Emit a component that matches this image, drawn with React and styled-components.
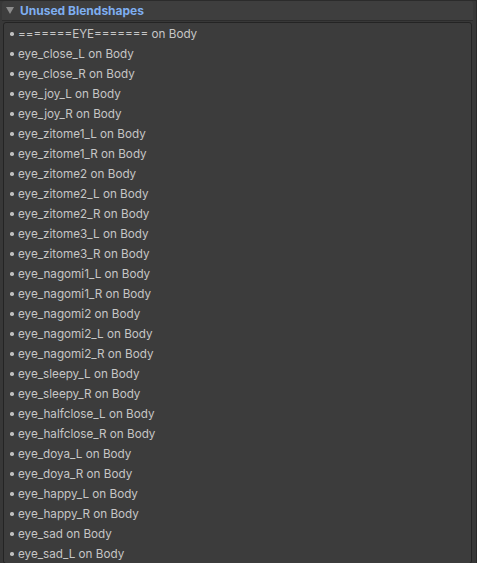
import React from 'react'
import styled, { createGlobalStyle } from 'styled-components'

const Global = createGlobalStyle`
  html, body {
    margin: 0;
    padding: 0;
    background: #383838;
    overflow: hidden;
  }
`

const Panel = styled.div`
  width: 477px;
  height: 563px;
  box-sizing: border-box;
  border-top: 1px solid #2b2b2b;
  padding-right: 3px;
  border-right: 1px solid #2a2a2a;
  font-family: Inter, "Noto Sans", sans-serif;
  overflow: hidden;
`

const Header = styled.div`
  display: flex;
  align-items: center;
  gap: 6px;
  height: 19px;
  margin-left: 2px;
  padding-left: 4px;
  background: #3e3e3e;
  border-radius: 3px 3px 0 0;
  border-bottom: 1px solid #2c2c2c;
`

const Arrow = styled.span`
  width: 0;
  height: 0;
  border-left: 4px solid transparent;
  border-right: 4px solid transparent;
  border-top: 7px solid #8c8c8c;
`

const Title = styled.span`
  color: #7eaef0;
  font-size: 12px;
  font-weight: 700;
`

const List = styled.ul`
  list-style: none;
  margin: 1px 1px 0 3px;
  padding: 0;
  background: #3c3c3c;
  border: 1px solid #242424;
  border-radius: 3px;
`

const Row = styled.li`
  display: flex;
  align-items: center;
  box-sizing: border-box;
  height: 20px;
  padding: 2px 0 0 6px;
  color: #c6c6c6;
  font-size: 11.7px;
  white-space: nowrap;

  &::before {
    content: '';
    width: 3.5px;
    height: 3.5px;
    border-radius: 50%;
    background: #c0c0c0;
    margin-right: 4.5px;
  }
`

const names = [
  '=======EYE=======',
  'eye_close_L',
  'eye_close_R',
  'eye_joy_L',
  'eye_joy_R',
  'eye_zitome1_L',
  'eye_zitome1_R',
  'eye_zitome2',
  'eye_zitome2_L',
  'eye_zitome2_R',
  'eye_zitome3_L',
  'eye_zitome3_R',
  'eye_nagomi1_L',
  'eye_nagomi1_R',
  'eye_nagomi2',
  'eye_nagomi2_L',
  'eye_nagomi2_R',
  'eye_sleepy_L',
  'eye_sleepy_R',
  'eye_halfclose_L',
  'eye_halfclose_R',
  'eye_doya_L',
  'eye_doya_R',
  'eye_happy_L',
  'eye_happy_R',
  'eye_sad',
  'eye_sad_L',
]

export default function App() {
  return (
    <>
      <Global />
      <Panel>
        <Header>
          <Arrow />
          <Title>Unused Blendshapes</Title>
        </Header>
        <List>
          {names.map((n) => (
            <Row key={n}>{n} on Body</Row>
          ))}
        </List>
      </Panel>
    </>
  )
}
